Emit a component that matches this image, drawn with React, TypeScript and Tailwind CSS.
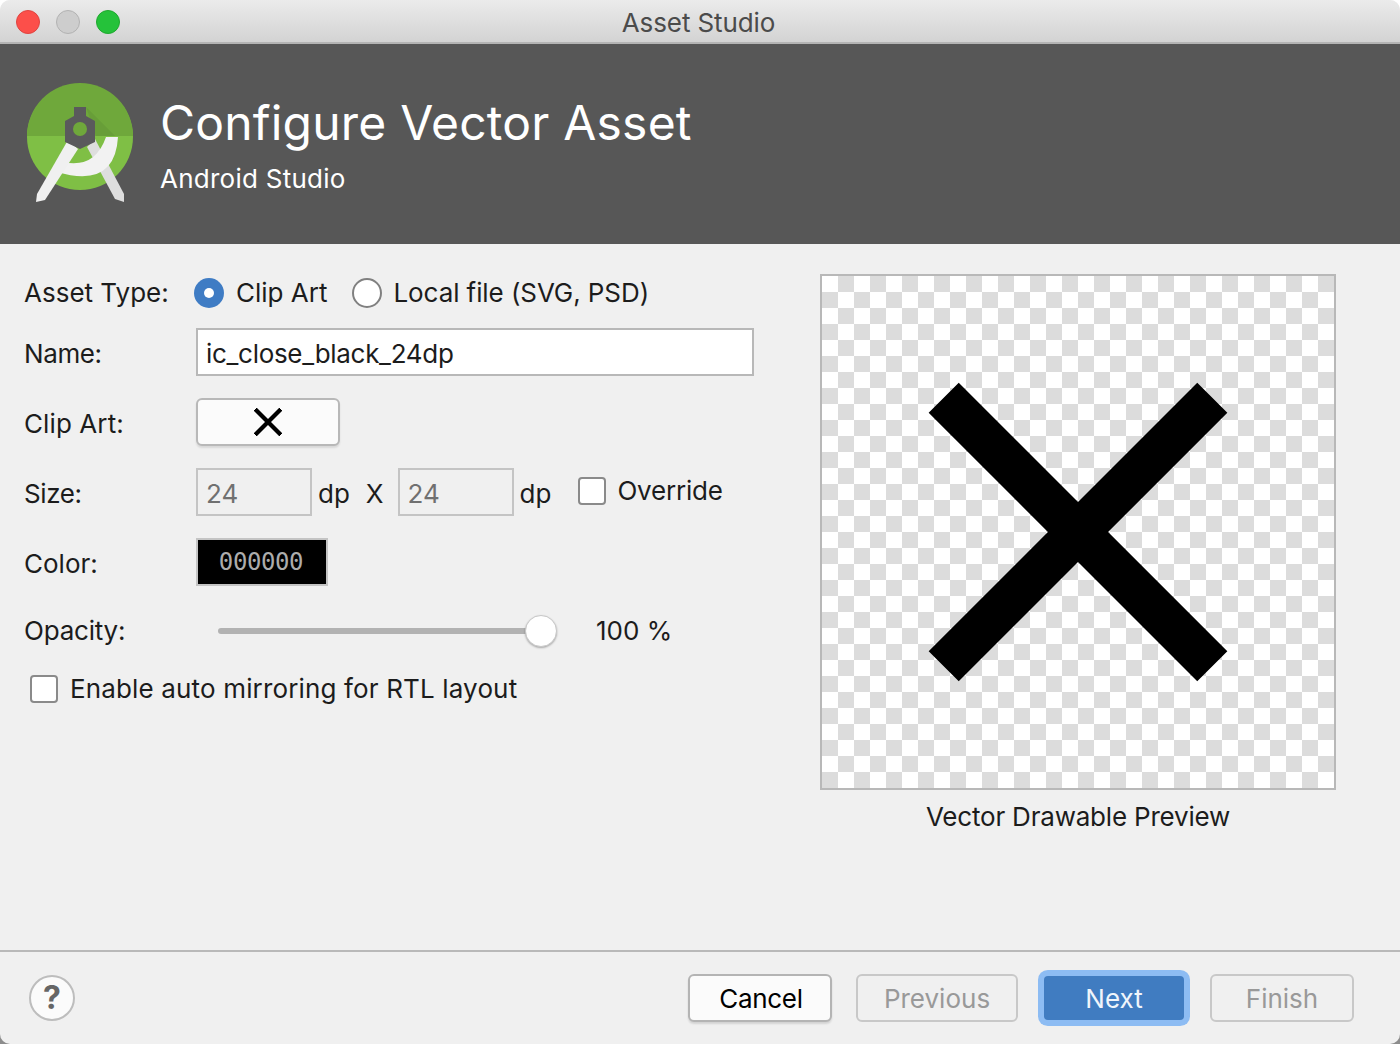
const SANS = "font-['Inter','Liberation_Sans',sans-serif]";

function Logo() {
  return (
    <svg viewBox="22 80 120 130" className="w-[120px] h-[130px] shrink-0">
      <circle cx="80" cy="138" r="53" fill="#7fbf45" />
      <path d="M27 137a53 53 0 0 1 106 0z" fill="#6fa83b" />
      <path d="M86 108l29 29H96z" fill="#659a38" opacity="0.7" />
      <path d="M87 148l8-8 29 55v8l-9-3z" fill="#dedede" />
      <path d="M63 163Q95 170 106 138h12Q115 190 57 173z" fill="#f2f2f2" />
      <path d="M68 141l10 9-33 51-9 2 1-8z" fill="#f0f0f0" />
      <path d="M74 108h12v9l9 5v21l-15 7-15-7v-21l9-5z" fill="#5a5a5c" />
      <circle cx="80" cy="130" r="7" fill="#6fa83b" />
    </svg>
  );
}

function CloseIcon({ size, crisp }: { size: number; crisp?: boolean }) {
  return (
    <svg viewBox="0 0 24 24" width={size} height={size} shapeRendering={crisp ? 'crispEdges' : undefined} className="shrink-0">
      <path d="M19 6.41L17.59 5 12 10.59 6.41 5 5 6.41 10.59 12 5 17.59 6.41 19 12 13.41 17.59 19 19 17.59 13.41 12z" fill="#000" stroke={crisp ? '#000' : undefined} strokeWidth={crisp ? 0.25 : undefined} />
    </svg>
  );
}

function Row({ label, labelClass, children, className }: any) {
  return (
    <div className={`flex items-center h-12 shrink-0 ${className}`}>
      <span className={`w-[172px] shrink-0 pt-[3px] text-[#1c1c1c] ${labelClass}`}>{label}</span>
      {children}
    </div>
  );
}

function Radio({ checked, className }: { checked?: boolean; className?: string }) {
  if (checked) {
    return (
      <span className={`w-[30px] h-[30px] rounded-full bg-[#3f7cc4] flex items-center justify-center shrink-0 ${className}`}>
        <span className="w-[10px] h-[10px] rounded-full bg-white" />
      </span>
    );
  }
  return <span className={`w-[30px] h-[30px] rounded-full bg-white border-2 border-[#808080] shrink-0 ${className}`} />;
}

function Checkbox() {
  return <span className="w-7 h-7 rounded-[4px] bg-white border-2 border-[#8a8a8a] shrink-0" />;
}

function Footer() {
  return (
    <div className="h-[94px] shrink-0 border-t-2 border-[#b9b9b9] flex items-center justify-between pl-[29px] pr-[46px] pb-[1px]">
      <span className="w-[46px] h-[46px] rounded-full bg-[#fbfbfb] border-2 border-[#bdbdbd] flex items-center justify-center text-[32px] font-bold text-[#666]">?</span>
      <div className="flex items-center">
        <button className="w-[144px] h-12 pt-[2px] pl-[2px] rounded-[6px] bg-[#fbfbfb] border-2 border-[#b4b4b4] shadow-[0_2px_2px_rgba(0,0,0,0.12)] text-black tracking-[-0.3px]">Cancel</button>
        <button className="w-[162px] h-12 pt-[2px] ml-6 rounded-[6px] border-2 border-[#c8c8c8] text-[#999]">Previous</button>
        <button className="w-[140px] h-[44px] pt-[2px] ml-[26px] rounded-[4px] bg-[#407cc1] ring-[6px] ring-[#8dbcf3] text-[#f0f5fb]">Next</button>
        <button className="w-[144px] h-12 pt-[2px] ml-[26px] rounded-[6px] border-2 border-[#c8c8c8] text-[#999]">Finish</button>
      </div>
    </div>
  );
}

export default function App() {
  return (
    <div className="w-[1400px] h-[1044px] bg-gradient-to-b from-white to-[#8c8c8c] overflow-hidden">
      <div className={`w-full h-full rounded-[10px] overflow-hidden bg-[#f0f0f0] flex flex-col text-[26px] leading-none ${SANS}`}>
        {/* Title bar */}
        <div className="relative h-11 shrink-0 bg-gradient-to-b from-[#ebebeb] to-[#d3d3d3] border-b-2 border-[#b4b4b4] flex items-center justify-center text-[#4b4b4b] pt-1 pr-[3px] tracking-[-0.1px]">
          <div className="absolute left-4 top-2.5 flex gap-[16px]">
            <span className="w-6 h-6 rounded-full bg-[#fc4f4a] border border-[#df4440]" />
            <span className="w-6 h-6 rounded-full bg-[#cdcdcd] border border-[#b2b2b2]" />
            <span className="w-6 h-6 rounded-full bg-[#25c23a] border border-[#1fa82f]" />
          </div>
          Asset Studio
        </div>

        {/* Banner */}
        <div className="h-[200px] shrink-0 bg-[#575757] flex items-center pl-[22px] gap-[18px] text-white">
          <Logo />
          <div className="flex flex-col pt-[2px]">
            <span className="text-[48px] leading-[56px] tracking-[0.2px]">Configure Vector Asset</span>
            <span className="text-[26px] leading-[32px] mt-[12px] tracking-[0.25px]">Android Studio</span>
          </div>
        </div>

        {/* Body */}
        <div className="flex-1 flex min-h-0 pl-6">
          <div className="w-[796px] shrink-0 pt-[25px] flex flex-col">
            <div className="flex items-center h-12 shrink-0">
              <span className="w-[170px] shrink-0 text-[#1c1c1c]">Asset Type:</span>
              <Radio checked />
              <span className="ml-3 text-[#1c1c1c]">Clip Art</span>
              <Radio className="ml-[25px]" />
              <span className="ml-[11px] text-[#1c1c1c] tracking-[-0.08px]">Local file (SVG, PSD)</span>
            </div>
            <Row label="Name:" labelClass="tracking-[-0.4px]" className="mt-[11px]">
              <div className="w-[558px] h-12 pt-[3px] bg-white border-2 border-[#b8b8b8] flex items-center px-2 text-[#1c1c1c] tracking-[-0.3px]">ic_close_black_24dp</div>
            </Row>
            <Row label="Clip Art:" labelClass="tracking-[0.1px]" className="mt-[22px]">
              <button className="w-[144px] h-12 rounded-[6px] bg-[#fbfbfb] border-2 border-[#b8b8b8] shadow-[0_2px_2px_rgba(0,0,0,0.1)] flex items-center justify-center">
                <CloseIcon size={48} crisp />
              </button>
            </Row>
            <Row label="Size:" labelClass="tracking-[-0.4px]" className="mt-[22px]">
              <div className="w-[116px] h-12 pt-[3px] border-2 border-[#c4c4c4] flex items-center px-2 text-[#707070]">24</div>
              <span className="ml-[6px] pt-[3px] text-[#1c1c1c]">dp</span>
              <span className="ml-[16px] pt-[3px] text-[#1c1c1c]">X</span>
              <div className="w-[116px] h-12 pt-[3px] ml-[14px] border-2 border-[#c4c4c4] flex items-center px-2 text-[#707070]">24</div>
              <span className="ml-[6px] pt-[3px] text-[#1c1c1c]">dp</span>
              <span className="ml-[27px] flex items-center -mt-[2px]">
                <Checkbox />
                <span className="ml-[11px] text-[#1c1c1c] tracking-[-0.2px]">Override</span>
              </span>
            </Row>
            <Row label="Color:" className="mt-[22px]">
              <div className="w-[132px] h-12 bg-black border-2 border-[#c4c4c4] flex items-center justify-center pr-[2px] text-[#acacac] text-[24px] font-medium tracking-[-0.4px] font-['DejaVu_Sans_Mono','Liberation_Mono',monospace]">000000</div>
            </Row>
            <div className="flex items-center h-12 shrink-0 mt-[21px]">
              <span className="w-[194px] shrink-0 text-[#1c1c1c] tracking-[-0.2px]">Opacity:</span>
              <div className="relative w-[323px] h-[6px] rounded-full bg-[#b2b2b2] shrink-0">
                <span className="absolute right-[-16px] -top-[13px] w-8 h-8 rounded-full bg-white border border-[#c8c8c8] shadow-[0_1px_2px_rgba(0,0,0,0.3)]" />
              </div>
              <span className="ml-[55px] text-[#1c1c1c]">100 %</span>
            </div>
            <div className="flex items-center h-12 shrink-0 mt-[10px] pl-[6px]">
              <Checkbox />
              <span className="ml-3 text-[#1c1c1c] tracking-[0.15px]">Enable auto mirroring for RTL layout</span>
            </div>
          </div>

          <div className="pt-[30px] flex flex-col items-center w-[516px] shrink-0">
            <div className="w-[516px] h-[516px] shrink-0 border-2 border-[#b8b8b8] bg-[conic-gradient(#dcdcdc_25%,#ffffff_0_50%,#dcdcdc_0_75%,#ffffff_0)] bg-[length:32px_32px] flex items-center justify-center">
              <CloseIcon size={512} />
            </div>
            <span className="mt-[14px] leading-[26px] text-[#1c1c1c] tracking-[-0.2px]">Vector Drawable Preview</span>
          </div>
        </div>

        <Footer />
      </div>
    </div>
  );
}
